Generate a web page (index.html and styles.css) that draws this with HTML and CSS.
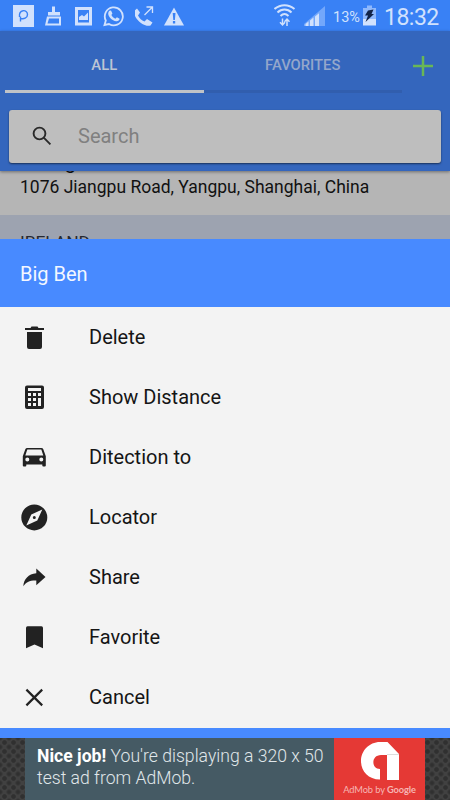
FILE: index.html
```html
<!DOCTYPE html>
<html lang="en">
<head>
<meta charset="utf-8">
<title>Places</title>
<link rel="stylesheet" href="styles.css">
</head>
<body>
<div class="status">
  <div class="notices">
    <svg width="21" height="31" viewBox="13 0 21 31"><path fill="#d1e1fd" d="M13 5h21v22H13z"/><path fill="none" stroke="#3981f5" stroke-width="1.400" d="M20.500 21.500v-5M19.500 17c-1-8 8-8 8-2.500 0 4-4 4.500-6.500 4"/></svg>
    <svg width="17" height="31" viewBox="45 0 17 31"><path fill="#d1e1fd" d="M52 6.500h3V12h5v3.500H48V12h4zM47 16.500h14v9H45z"/><path fill="#3981f5" d="M49 18.500h10v5H47.500z"/></svg>
    <svg width="17" height="31" viewBox="75 0 17 31"><path fill="#d1e1fd" fill-rule="evenodd" d="M75 7h17v18.500H75zm3 3v12.500h11V10z"/><path fill="#d1e1fd" d="M79 20v-3l3-2 2 1.500 4-4V20z"/></svg>
    <svg width="21" height="31" viewBox="103 0 21 31"><path fill="none" stroke="#d1e1fd" stroke-width="1.800" d="M104.500 25l1.300-4.500A9 9 0 1 1 109 24z"/><path fill="#d1e1fd" d="M109.300 10.700l1.700-.1 1.400 3-1 1.400c1 2 2 2.900 4 3.700l1.500-1.500 2.700 1.500c0 1.700-1.700 2.700-3.400 2.500-4-.6-8-4.500-8-7.800 0-1 .4-2 1.100-2.700z"/></svg>
    <svg width="20" height="31" viewBox="135 0 20 31"><path fill="#d1e1fd" d="M137 8.500l3 4-2 3c1.700 3 3.500 4.700 6.500 6l2.500-2.500 5.500 3.500-2 3c-6 2-17-6.500-16.500-14.500z"/><path fill="none" stroke="#d1e1fd" stroke-width="1.300" d="M144.500 15l8-8M146.500 7h6v6"/></svg>
    <svg width="20" height="31" viewBox="163 0 20 31"><path fill="#d1e1fd" d="M173 7.500L183 25.500H163z"/><path fill="#3981f5" d="M171.700 13h2.800l-.6 7h-1.600zM171.900 21h2.300v2.500h-2.300z"/></svg>
  </div>
  <div class="system">
    <svg width="22" height="31" viewBox="274 0 22 31"><g fill="none" stroke="#d1e1fd" stroke-width="2"><path d="M274.500 9c6-5 14-5 20 0M277.500 12.500c4-4 10-4 14 0M280.500 16c2.500-2.500 5.500-2.500 8 0"/><path stroke-width="1.500" d="M282.500 18.500v6M287 20v6M280 22.300l2.500 2.700 2.500-2.700M284.500 21.700L287 19l2.500 2.700"/></g></svg>
    <svg class="signal" width="21" height="31" viewBox="304 0 21 31"><path fill="#73a7fb" d="M304 26V24L325 6v20z"/><path fill="#d1e1fd" d="M305.500 26v-2l3-2.500V26zM310 26v-5.500l3.500-3V26zM315 26v-9.500l4-3.300V26z"/></svg>
    <span class="percent">13%</span>
    <svg class="battery" width="13" height="31" viewBox="363 0 13 31"><path fill="#8fb9fd" d="M367 5.500h5V8h4v11h-13V8h4z"/><path fill="#d1e1fd" d="M363 19h13v6.500h-13z"/><path fill="#132549" d="M368 10.500l5.500-1-2 4.500h2.500l-8.500 8 2.500-6.500h-3z"/></svg>
    <span class="clock">18:32</span>
  </div>
</div>
<header class="header">
  <div class="topbar">
    <nav class="tabs"><div class="tab active">ALL</div><div class="tab">FAVORITES</div></nav>
    <svg class="plus" width="22" height="22" viewBox="0 0 22 22"><path d="M11 1v20M1 11h20"/></svg>
  </div>
  <div class="search">
    <svg width="20" height="20" viewBox="0 0 20 20"><circle cx="7.500" cy="7.500" r="5.900"/><path d="M11.700 11.700l6.700 6.700"/></svg>
    <span>Search</span>
  </div>
</header>
<main class="list">
  <div class="entry"><div class="name">Shanghai</div><div class="address">1076 Jiangpu Road, Yangpu, Shanghai, China</div></div>
  <div class="divider">IRELAND</div>
</main>
<section class="sheet">
  <h2>Big Ben</h2>
  <ul>
    <li><svg viewBox="0 0 28 28"><path d="M7 9h15v15q0 2-2 2H9q-2 0-2-2zM5 5h5.500l1-1.500h6l1 1.500H24v2H5z"/></svg><span>Delete</span></li>
    <li><svg viewBox="0 0 28 28"><path fill-rule="evenodd" d="M7 2.500h15q2 0 2 2V24q0 2-2 2H7q-2 0-2-2V4.500q0-2 2-2zm1 2.500v3h13v-3zm0 5v3h3v-3zm5 0v3h3v-3zm5 0v3h3v-3zm-10 5v3h3v-3zm5 0v3h3v-3zm5 0v8h3v-8zm-10 5v3h3v-3zm5 0v3h3v-3z"/></svg><span>Show Distance</span></li>
    <li><svg viewBox="0 0 28 28"><path fill-rule="evenodd" d="M7.300 5h14q1.500 0 2 1.300l2.500 7v9.200q0 1-1 1h-1.500q-1 0-1-1v-1h-16v1q0 1-1 1H3.800q-1 0-1-1v-9.200l2.500-7q.5-1.300 2-1.300zm0 1.500l-2 6h18l-2-6zm0 8a2 2 0 1 0 0 4 2 2 0 1 0 0-4zm14 0a2 2 0 1 0 0 4 2 2 0 1 0 0-4z"/></svg><span>Ditection to</span></li>
    <li><svg viewBox="0 0 28 28"><path fill-rule="evenodd" d="M14.300 1.400a13 13 0 1 0 0 26 13 13 0 1 0 0-26zm8 5l-5 11-11 5 5-11zm-8 6.500a1.500 1.500 0 1 0 0 3 1.500 1.500 0 1 0 0-3z"/></svg><span>Locator</span></li>
    <li><svg viewBox="0 0 28 28"><path d="M16.300 5.400l9.200 8.500-9.200 8.300v-4.700C9.500 17.300 6 19.300 3.300 23.300c.5-7 5-12.300 13-13z"/></svg><span>Share</span></li>
    <li><svg viewBox="0 0 28 28"><path d="M7.500 3.300h14q1.500 0 1.500 1.600v20.400l-8.500-3.700L6 25.300V4.900q0-1.600 1.500-1.600z"/></svg><span>Favorite</span></li>
    <li><svg viewBox="0 0 28 28"><path fill="none" stroke="#222" stroke-width="2.200" d="M6.400 6.600l15.800 15.800M22.200 6.600L6.400 22.400"/></svg><span>Cancel</span></li>
  </ul>
</section>
<footer class="ad">
  <div class="banner">
    <p><b>Nice job!</b> You're displaying a 320 x 50<br>test ad from AdMob.</p>
    <div class="brand">
      <svg width="38" height="38" viewBox="0 0 38 38"><path fill="#fff" d="M26.500 0L38 12v26H26V13h-6c-10 0-10 14-1 14v10.500C7 37.500 0 29 0 19S8 0 19 0z"/><path fill="#ddd" d="M26 12h11.500L38 13H26z"/></svg>
      <div class="credit">AdMob by <b>Google</b></div>
    </div>
  </div>
</footer>
</body>
</html>
```

FILE: styles.css
```css
* { box-sizing: border-box; }
body { margin: 0; width: 450px; height: 800px; overflow: hidden; display: flex; flex-direction: column; font-family: Roboto, sans-serif; background: #488aff; }
svg { display: block; flex: none; }

.status { height: 31px; flex: none; display: flex; justify-content: space-between; background: #3981f5; color: #d1e1fd; padding: 0 12px 0 13px; }
.notices { display: flex; gap: 11px; }
.notices svg:nth-child(3) { margin-left: 2px; }
.notices svg:nth-child(6) { margin-left: -2px; }
.system { display: flex; align-items: center; }
.signal { margin-left: 8px; }
.percent { width: 30px; margin-left: 8px; font-size: 14.500px; white-space: nowrap; padding-top: 3px; }
.clock { width: 54px; margin-left: 8px; font-size: 23px; line-height: 31px; letter-spacing: -0.500px; padding-top: 4px; }

.header { height: 140px; flex: none; background: #3466bd; position: relative; box-shadow: 0 1px 3px #0006; }
.topbar { display: flex; height: 79px; padding-left: 5px; }
.tabs { display: flex; height: 62px; width: 397px; }
.tab { flex: 1; border-bottom: 3px solid #315eae; text-align: center; line-height: 69px; font-size: 14.800px; font-weight: 500; color: #94a7cb; }
.tab.active { border-color: #c0c3c7; color: #bcc5d4; }
.plus { margin: 24px 0 0 10px; fill: none; stroke: #69b756; stroke-width: 2.500; }
.search { display: flex; align-items: center; height: 53px; margin: 0 9px; padding: 0 0 2px 23px; background: #bebebe; border-radius: 3px; box-shadow: 0 1px 2px #0008; color: #808080; font-size: 20px; }
.search svg { fill: none; stroke: #292929; stroke-width: 1.900; margin-right: 26px; }

.list { height: 68px; flex: none; overflow: hidden; background: #b5b5b5; display: flex; flex-direction: column; color: #111; }
.entry { height: 44px; flex: none; padding-left: 20px; display: flex; flex-direction: column; justify-content: flex-end; font-size: 17.500px; }
.name { font-size: 20px; line-height: 20px; margin-bottom: 5px; }
.address { line-height: 20px; margin-bottom: 18px; white-space: nowrap; }
.divider { flex: none; height: 50px; padding-left: 20px; background: #9da3b0; line-height: 55px; font-size: 17.400px; color: #252830; }

.sheet { height: 489px; flex: none; background: #f3f3f3; color: #151515; }
h2 { margin: 0; height: 68px; padding-left: 20px; background: #488aff; color: #f3f7ff; font-size: 20px; line-height: 71px; font-weight: 400; }
ul { margin: 0; padding: 0; list-style: none; }
li { height: 60px; padding-left: 20px; display: flex; align-items: center; font-size: 20px; }
li svg { width: 28px; height: 28px; fill: #222; margin-right: 41px; }

.ad { height: 62px; margin-top: 10px; flex: none; padding: 0 25px; background-color: #414141; background-image: radial-gradient(circle, #303030 1.800px, transparent 2.800px), radial-gradient(circle, #303030 1.800px, transparent 2.800px); background-size: 9px 9px; background-position: 0 0, 4.500px 4.500px; }
.banner { height: 62px; display: flex; background: #455a64; }
.banner p { margin: 0; width: 309px; padding: 8px 0 0 12px; font-size: 17.600px; line-height: 21.500px; font-weight: 300; color: #e0e7ea; white-space: nowrap; }
.banner p b { font-weight: 700; color: #fff; }
.brand { width: 91px; background: #e53935; color: #f6b5b3; display: flex; flex-direction: column; align-items: center; padding-top: 4px; font: 9.300px/20px Lato, sans-serif; letter-spacing: -0.100px; white-space: nowrap; }
.brand b { font-weight: 700; }
```
